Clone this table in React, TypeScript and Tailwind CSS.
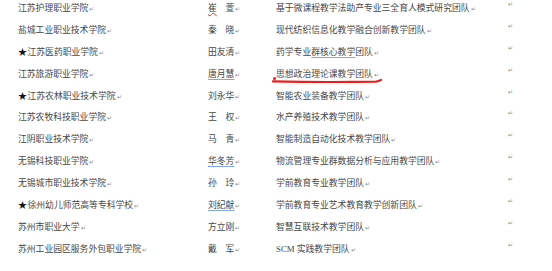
import React from "react";

type Row = {
  school: string;
  star?: boolean;
  name: string;
  nameMark?: "wavy" | "blue";
  team: React.ReactNode;
};

const Mark = () => (
  <span className="ml-[1px] text-[6px] leading-none text-[#8a8a8a] align-baseline">↵</span>
);

const rows: Row[] = [
  { school: "江苏护理职业学院", name: "崔　萱", nameMark: "wavy", team: "基于微课程教学法助产专业三全育人模式研究团队" },
  { school: "盐城工业职业技术学院", name: "秦　晓", team: "现代纺织信息化教学融合创新教学团队" },
  {
    school: "江苏医药职业学院",
    star: true,
    name: "田友清",
    team: (
      <>
        药学专业
        <span className="underline decoration-[#7fa4ec] decoration-[1px] underline-offset-[2px]">群核心教学</span>
        团队
      </>
    ),
  },
  {
    school: "江苏旅游职业学院",
    name: "唐月慧",
    nameMark: "blue",
    team: (
      <span className="relative">
        思想政治理论课教学团队
        <svg className="absolute left-[-4px] top-[9px]" width="112" height="6" viewBox="0 0 112 6">
          <path d="M1 3.4 C 30 4, 70 4.2, 104 3.6 C 107 3.4, 108 2.6, 109 2" stroke="#ee1c1c" strokeWidth="2.2" fill="none" strokeLinecap="round" />
        </svg>
      </span>
    ),
  },
  { school: "江苏农林职业技术学院", star: true, name: "刘永华", team: "智能农业装备教学团队" },
  { school: "江苏农牧科技职业学院", name: "王　权", team: "水产养殖技术教学团队" },
  { school: "江阴职业技术学院", name: "马　青", team: "智能制造自动化技术教学团队" },
  { school: "无锡科技职业学院", name: "华冬芳", nameMark: "blue", team: "物流管理专业群数据分析与应用教学团队" },
  { school: "无锡城市职业技术学院", name: "孙　玲", team: "学前教育专业教学团队" },
  { school: "徐州幼儿师范高等专科学校", star: true, name: "刘纪献", nameMark: "blue", team: "学前教育专业艺术教育教学创新团队" },
  { school: "苏州市职业大学", name: "方立刚", team: "智慧互联技术教学团队" },
  { school: "苏州工业园区服务外包职业学院", name: "戴　军", team: "SCM 实践教学团队" },
];

function NameCell({ row }: { row: Row }) {
  if (row.nameMark === "blue") {
    return (
      <span className="underline decoration-[#7fa4ec] decoration-[1px] underline-offset-[2px]">{row.name}</span>
    );
  }
  if (row.nameMark === "wavy") {
    const [first, ...rest] = Array.from(row.name);
    return (
      <>
        <span className="underline decoration-wavy decoration-[#e0302a] decoration-[1px] underline-offset-[1px]">{first}</span>
        {rest.join("")}
      </>
    );
  }
  return <>{row.name}</>;
}

export default function App() {
  return (
    <div
      className="w-[552px] h-[271px] overflow-hidden bg-white text-[#474747] text-[8.8px]"
      style={{ fontFamily: '"Liberation Serif", "Noto Sans CJK SC", serif' }}
    >
      <div className="pt-[2px]">
        {rows.map((row, i) => (
          <div key={i} className="flex h-[21.9px] leading-[12px]">
            <div className="w-[208px] pl-[18px] whitespace-nowrap">
              {row.star && <span className="text-[#111] text-[9px] mr-[0.5px]">★</span>}
              {row.school}
              <Mark />
            </div>
            <div className="w-[68px] whitespace-nowrap">
              <NameCell row={row} />
              <Mark />
            </div>
            <div className="w-[232px] whitespace-nowrap relative">
              {row.team}
              <Mark />
              {i === 3 && (
                <span className="absolute left-[-3px] top-[9px] w-[3px] h-[3px] rounded-full bg-[#ee1c1c]" />
              )}
            </div>
            <div className="-mt-[1px] text-[6px] leading-none text-[#8a8a8a]">↵</div>
          </div>
        ))}
      </div>
    </div>
  );
}
